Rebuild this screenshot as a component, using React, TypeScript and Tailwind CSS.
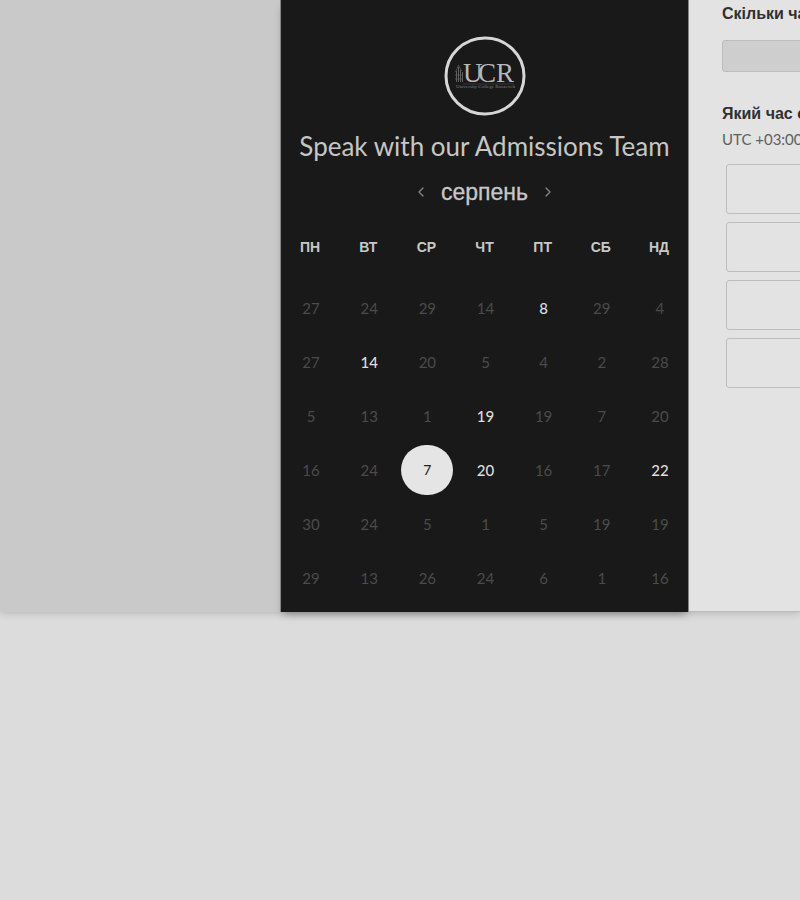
import { ChevronLeft, ChevronRight } from "lucide-react";

const sans = "font-['Liberation_Sans',Arial,sans-serif]";

const weekdays = ["ПН", "ВТ", "СР", "ЧТ", "ПТ", "СБ", "НД"];

type Day = { n: number; open?: boolean; selected?: boolean };

const weeks: Day[][] = [
  [{ n: 27 }, { n: 24 }, { n: 29 }, { n: 14 }, { n: 8, open: true }, { n: 29 }, { n: 4 }],
  [{ n: 27 }, { n: 14, open: true }, { n: 20 }, { n: 5 }, { n: 4 }, { n: 2 }, { n: 28 }],
  [{ n: 5 }, { n: 13 }, { n: 1 }, { n: 19, open: true }, { n: 19 }, { n: 7 }, { n: 20 }],
  [{ n: 16 }, { n: 24 }, { n: 7, selected: true }, { n: 20, open: true }, { n: 16 }, { n: 17 }, { n: 22, open: true }],
  [{ n: 30 }, { n: 24 }, { n: 5 }, { n: 1 }, { n: 5 }, { n: 19 }, { n: 19 }],
  [{ n: 29 }, { n: 13 }, { n: 26 }, { n: 24 }, { n: 6 }, { n: 1 }, { n: 16 }],
];

const slots = [1, 2, 3, 4];

function Logo() {
  return (
    <svg viewBox="0 0 82 80" className="h-20 w-[82px]" role="img" aria-label="UCR">
      <ellipse cx="41" cy="40" rx="39" ry="38" fill="#191919" stroke="#d6d6d6" strokeWidth="3" />
      <g fill="none" stroke="#606060" strokeWidth="1">
        <path d="M12.500 46V35M14.500 46V31M16.500 46V34M18.500 46V36" />
        <path d="M11.500 36l3-7 3 6M11 39h8M11 43h8" strokeWidth="0.700" />
      </g>
      <text x="19 34 52" y="46" fill="#b8b8b8" fontFamily="Liberation Serif, serif" fontSize="27">UCR</text>
      <path d="M19 48h51" stroke="#4c4c4c" strokeWidth="0.600" />
      <text x="12" y="52" fill="#808080" fontFamily="Liberation Serif, serif" fontSize="5">University College Roosevelt</text>
    </svg>
  );
}

function DayButton({ day }: { day: Day }) {
  if (day.selected) {
    return (
      <button type="button" aria-pressed="true" className="h-[50px] w-[52px] rounded-full bg-[#e5e5e5] text-sm text-[#222]">
        {day.n}
      </button>
    );
  }
  return (
    <button
      type="button"
      disabled={!day.open}
      className={day.open ? "h-12 w-12 font-medium text-[#dedede]" : "h-12 w-12 text-[#4b4b4b]"}
    >
      {day.n}
    </button>
  );
}

function Calendar() {
  return (
    <section className="w-[409px] shrink-0 border-x border-[#858585] bg-[#191919] pt-9 pb-[7px] font-[Lato,sans-serif] shadow-[0_5px_8px_-3px_rgba(0,0,0,0.35)]">
      <div className="flex justify-center">
        <Logo />
      </div>
      <h1 className="mt-3 text-center text-[26px] leading-9 whitespace-nowrap text-[#c6c6c6]">
        Speak with our Admissions Team
      </h1>
      <div className="mt-3 flex h-8 items-center justify-center gap-3">
        <button type="button" aria-label="Попередній місяць" className="text-[#858585]">
          <ChevronLeft size={16} />
        </button>
        <h2 className={`${sans} text-[23px] leading-8 text-[#c8c8c8] [-webkit-text-stroke:0.3px_#c8c8c8]`}>серпень</h2>
        <button type="button" aria-label="Наступний місяць" className="text-[#858585]">
          <ChevronRight size={16} />
        </button>
      </div>
      <table className="mt-[25px] w-full table-fixed border-collapse">
        <thead>
          <tr>
            {weekdays.map((d) => (
              <th key={d} scope="col" className={`${sans} h-12 p-0 pb-5 text-sm font-bold text-[#c8c8c8]`}>
                {d}
              </th>
            ))}
          </tr>
        </thead>
        <tbody className="text-[15px]">
          {weeks.map((week, i) => (
            <tr key={i} className="h-[54px]">
              {week.map((day, j) => (
                <td key={j} className="p-0 pl-[2px]">
                  <div className="flex justify-center">
                    <DayButton day={day} />
                  </div>
                </td>
              ))}
            </tr>
          ))}
        </tbody>
      </table>
    </section>
  );
}

export default function App() {
  return (
    <main className="min-h-screen overflow-hidden bg-[#dcdcdc]">
      <div className="flex bg-[#c9c9c9] shadow-[0_1px_8px_rgba(0,0,0,0.18)]">
        <div className="w-[35%] shrink-0" />
        <Calendar />
        <section className={`${sans} min-w-0 flex-1 overflow-hidden border-b border-[#bdbdbd] bg-[#e3e3e3] pl-[33px] whitespace-nowrap`}>
          <h2 className="mt-1 text-base leading-5 font-bold text-[#303030]">Скільки часу вам потрібно?</h2>
          <button
            type="button"
            aria-label="Тривалість"
            className="mt-4 block h-8 w-[calc(100%+8px)] rounded-[3px] border border-[#bcbcbc] bg-[#cecece]"
          />
          <h2 className="mt-8 text-base leading-5 font-bold text-[#303030]">Який час є найзручнішим?</h2>
          <p className="mt-1 font-[Lato,sans-serif] text-[15px] leading-[22px] text-[#606060]">UTC +03:00</p>
          <div className="mt-[14px] -mr-2 ml-1 flex flex-col gap-2">
            {slots.map((s) => (
              <button
                key={s}
                type="button"
                aria-label={`Час ${s}`}
                className="h-[50px] rounded-[3px] border border-[#bdbdbd] bg-[#e3e3e3]"
              />
            ))}
          </div>
        </section>
      </div>
    </main>
  );
}
